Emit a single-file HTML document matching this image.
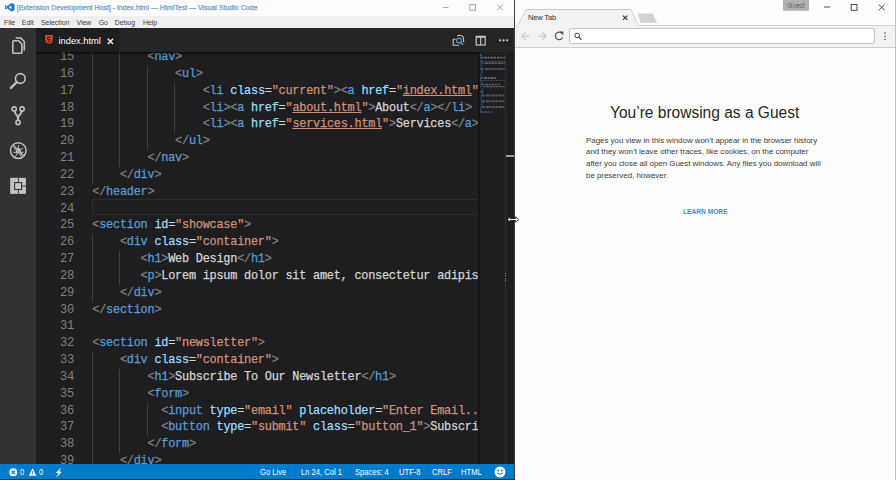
<!DOCTYPE html>
<html><head><meta charset="utf-8">
<style>
*{margin:0;padding:0;box-sizing:border-box}
html,body{width:896px;height:480px;overflow:hidden;background:#fff;font-family:"Liberation Sans",sans-serif}
.abs{position:absolute}
/* VS Code */
#vs{position:absolute;left:0;top:0;width:515px;height:480px;background:#1e1d1f;overflow:hidden}
#title{position:absolute;left:0;top:0;width:514px;height:16px;background:#fdfdfd}
#title .t{position:absolute;left:16.7px;top:3px;font-size:7px;color:#9d9d9d;white-space:nowrap;line-height:10px}
#menu{position:absolute;left:0;top:16px;width:514px;height:12px;background:#efeff0}
#menu span{position:absolute;top:1.5px;font-size:6.9px;color:#3a3a3a;line-height:10px;white-space:nowrap}
#act{position:absolute;left:0;top:28px;width:36px;height:436px;background:#323133}
#tabs{position:absolute;left:36px;top:28px;width:479px;height:24px;background:#252526}
#tab{position:absolute;left:0;top:0;width:83px;height:24px;background:#1e1d1f}
#editor{position:absolute;left:36px;top:52px;width:443px;height:412px;overflow:hidden;background:#1e1d1f}
.cl{position:absolute;white-space:pre;-webkit-text-stroke:0.25px currentColor;font-family:"Liberation Mono",monospace;font-size:11.9px;letter-spacing:-0.24px;line-height:16.84px;height:16.84px}
.ln{position:absolute;left:0;width:37.8px;text-align:right;font-family:"Liberation Mono",monospace;font-size:12.1px;letter-spacing:-0.35px;line-height:16.84px;color:#808080}
.ig{position:absolute;width:1px;background:#404040}
.curline{position:absolute;left:55.6px;width:400px;height:16.3px;border:1.5px solid #2c2c2c}
.p{color:#808080;-webkit-text-stroke:0.25px #808080}.t{color:#569cd6;-webkit-text-stroke:0.25px #569cd6}.a{color:#9cdcfe;-webkit-text-stroke:0.25px #9cdcfe}.s{color:#ce9178;-webkit-text-stroke:0.25px #ce9178}.x{color:#d4d4d4;-webkit-text-stroke:0.25px #d4d4d4}
u{text-decoration:underline;text-underline-offset:1px}
#shadow{position:absolute;left:36px;top:52px;width:443px;height:3px;background:linear-gradient(rgba(0,0,0,.6) 0%,rgba(0,0,0,.35) 50%,rgba(0,0,0,0) 100%)}
#minimap{position:absolute;left:479px;top:52px;width:27px;height:412px;background:#1e1d1f}
#ruler{position:absolute;left:505px;top:52px;width:9px;height:412px;background:#1e1d1f;border-left:1px solid #2e2e2e}
#status{position:absolute;left:0;top:464px;width:515px;height:15px;background:#007acc}
#status span{position:absolute;top:2.6px;font-size:8.6px;color:#fff;line-height:10px;white-space:nowrap;transform:scaleX(0.884);transform-origin:0 50%}
/* browser */
#br{position:absolute;left:515px;top:0;width:381px;height:480px;background:#fefefe}
#tbar{position:absolute;left:0;top:26px;width:381px;height:21px;background:#f2f2f2;border-bottom:1px solid #d2d2d2}
#addr{position:absolute;left:54px;top:28.3px;width:305.6px;height:16.2px;background:#fff;border:1px solid #c4c4c4;border-radius:2px}
#btitle{position:absolute;left:94.8px;top:103.1px;font-size:16px;transform:scaleX(0.97);transform-origin:0 0;color:#262626;white-space:nowrap;line-height:20px}
#bbody{position:absolute;left:71px;top:134.9px;font-size:7.9px;color:#3a3a3a;white-space:nowrap;line-height:11.6px}
#learn{position:absolute;left:168px;top:207.1px;font-size:6.8px;transform:scaleX(0.975);transform-origin:0 0;color:#4589d4;white-space:nowrap;line-height:10px;font-weight:bold}
</style></head>
<body>
<div id="vs">
  <div id="title">
    <svg class="abs" style="left:4.5px;top:3px" width="10" height="9" viewBox="0 0 10 9"><path d="M6.4 0 L9.5 1.3 V7.3 L6.4 8.6 L2.3 5.3 L0.9 6.5 L0.2 6.1 V2.5 L0.9 2.1 L2.3 3.3 Z M6.4 2.4 L3.7 4.3 L6.4 6.2 Z M1 3.4 V5.2 L2 4.3 Z" fill="#1a78d0" fill-rule="evenodd"/></svg>
    <div class="t">[Extension Development Host] - index.html — HtmlTest — Visual Studio Code</div>
    <svg class="abs" style="left:440px;top:2px" width="68" height="11" viewBox="0 0 68 11">
      <path d="M3 5.5 H8.6" stroke="#a0a0a0" stroke-width="0.9"/>
      <rect x="29.8" y="2.6" width="5.8" height="5.6" fill="none" stroke="#a0a0a0" stroke-width="0.9"/>
      <path d="M57.4 2.5 L63 8.2 M63 2.5 L57.4 8.2" stroke="#a0a0a0" stroke-width="0.9"/>
    </svg>
  </div>
  <div id="menu">
    <span style="left:4px">File</span>
    <span style="left:21.8px">Edit</span>
    <span style="left:41px">Selection</span>
    <span style="left:76.5px">View</span>
    <span style="left:98.7px">Go</span>
    <span style="left:114.7px">Debug</span>
    <span style="left:143px">Help</span>
  </div>
  <div id="act">
    <svg class="abs" style="left:0;top:0" width="36" height="180" viewBox="0 0 36 180">
      <g fill="none" stroke="#c0c0c0" stroke-width="1.6" stroke-linejoin="round">
        <path d="M13.6 12.8 H18.6 L21.9 16.1 V24.5 Q21.9 25.3 21.1 25.3 H13.6 Q12.8 25.3 12.8 24.5 V13.6 Q12.8 12.8 13.6 12.8 Z"/>
        <path d="M15.6 10 H20.8 L24.3 13.5 V22.6"/>
        <circle cx="20.3" cy="50.5" r="4.9"/>
        <path d="M16.9 54 L10.9 59.8" stroke-width="2.4" stroke-linecap="round"/>
        <circle cx="14.2" cy="81" r="2.1"/>
        <circle cx="22.1" cy="81" r="2.1"/>
        <circle cx="18" cy="94.5" r="2.1"/>
        <path d="M14.6 83.1 Q15 86 17 87.6 Q18 88.6 18 92.4 M21.7 83.1 Q21.3 86 19 87.6 Q18 88.6 18 92.4" stroke-width="1.9"/>
        <circle cx="18.3" cy="122.6" r="7.8" stroke-width="1.5"/>
        <path d="M13 117.2 L23.6 128" stroke-width="1.5"/>
      </g>
      <g stroke="#c0c0c0" stroke-width="1" stroke-linecap="round">
        <path d="M18.4 117.5 V120 M14 120.5 L16.2 121.6 M13.6 124.3 H15.8 M22.7 120.5 L20.6 121.6 M23.1 124.3 H21 M19.6 126 L21 128.3 M17 126 L15.6 128.3"/>
      </g>
      <ellipse cx="18.3" cy="122.9" rx="2.5" ry="2.9" fill="#c0c0c0"/>
      <path d="M12.6 117.6 L23.2 128.4" stroke="#333" stroke-width="0.8"/>
      <path d="M13 117.2 L23.6 128" stroke="#c0c0c0" stroke-width="1.1" fill="none"/>
      <rect x="10.2" y="149.8" width="15.7" height="16.1" fill="#c3c3c3"/>
      <rect x="14.6" y="154.6" width="7" height="6.9" fill="#c8c8c8" stroke="#333" stroke-width="1.1"/>
      <path d="M18.4 149.8 V154.1 M18.4 162 V165.9 M22.1 158 H25.9" stroke="#333" stroke-width="0.9"/>
    </svg>
  </div>
  <div id="tabs">
    <div id="tab">
      <svg class="abs" style="left:8.5px;top:7px" width="8" height="9" viewBox="0 0 8 9"><path d="M0 0 H8 L7.2 7.6 L4 8.8 L0.8 7.6 Z" fill="#e44d26"/><path d="M2 1.6 H6 L5.9 2.8 H3.2 L3.3 4 H5.8 L5.5 6.7 L4 7.2 L2.5 6.7 L2.4 5.4 H3.5 L3.6 6 L4 6.2 L4.5 6 L4.6 5 H2.3 Z" fill="#1e1e1e" opacity="0.85"/></svg>
      <div class="abs" style="left:22.5px;top:6.5px;font-size:9.3px;color:#ffffff;line-height:12px;white-space:nowrap">index.html</div>
      <svg class="abs" style="left:70.5px;top:9.5px" width="7" height="7" viewBox="0 0 7 7"><path d="M0.8 0.8 L6 6 M6 0.8 L0.8 6" stroke="#e8e8e8" stroke-width="1.6"/></svg>
    </div>
    <svg class="abs" style="left:410px;top:0" width="69" height="24" viewBox="0 0 69 24">
      <g fill="none" stroke="#c0c0c0" stroke-width="1.1">
        <path d="M9.8 11.3 H7.2 V17.3 H13.3"/>
        <path d="M11.2 8 Q12.2 7.3 13.8 7.3 Q17.6 7.6 17.6 11.5 V14.2"/>
      </g>
      <circle cx="13" cy="12.5" r="2.4" fill="#252526" stroke="#5a9ad2" stroke-width="1.2"/>
      <path d="M14.7 14.3 L17 16.8" stroke="#5a9ad2" stroke-width="1.5"/>
      <rect x="30.2" y="8.5" width="9" height="8.5" fill="none" stroke="#c5c5c5" stroke-width="1.2"/>
      <path d="M30 8.8 H39.4" stroke="#c5c5c5" stroke-width="2"/>
      <path d="M34.7 8.5 V17" stroke="#c5c5c5" stroke-width="1.2"/>
      <circle cx="54" cy="12.3" r="1.1" fill="#d0d0d0"/>
      <circle cx="57.6" cy="12.3" r="1.1" fill="#d0d0d0"/>
      <circle cx="61.2" cy="12.3" r="1.1" fill="#d0d0d0"/>
    </svg>
  </div>
  <div id="editor">
<div class="ig" style="left:55.5px;top:-3.00px;height:134.72px"></div>
<div class="ig" style="left:83.1px;top:-3.00px;height:117.88px"></div>
<div class="ig" style="left:110.7px;top:13.84px;height:84.20px"></div>
<div class="ig" style="left:138.3px;top:30.68px;height:50.52px"></div>
<div class="ig" style="left:55.5px;top:182.24px;height:67.36px"></div>
<div class="ig" style="left:83.1px;top:199.08px;height:33.68px"></div>
<div class="ig" style="left:55.5px;top:300.12px;height:117.88px"></div>
<div class="ig" style="left:83.1px;top:316.96px;height:84.20px"></div>
<div class="ig" style="left:110.7px;top:350.64px;height:33.68px"></div>
<div class="curline" style="top:147.16px"></div>
<div class="ln" style="top:-3.00px">15</div>
<div class="ln" style="top:13.84px">16</div>
<div class="ln" style="top:30.68px">17</div>
<div class="ln" style="top:47.52px">18</div>
<div class="ln" style="top:64.36px">19</div>
<div class="ln" style="top:81.20px">20</div>
<div class="ln" style="top:98.04px">21</div>
<div class="ln" style="top:114.88px">22</div>
<div class="ln" style="top:131.72px">23</div>
<div class="ln" style="top:148.56px">24</div>
<div class="ln" style="top:165.40px">25</div>
<div class="ln" style="top:182.24px">26</div>
<div class="ln" style="top:199.08px">27</div>
<div class="ln" style="top:215.92px">28</div>
<div class="ln" style="top:232.76px">29</div>
<div class="ln" style="top:249.60px">30</div>
<div class="ln" style="top:266.44px">31</div>
<div class="ln" style="top:283.28px">32</div>
<div class="ln" style="top:300.12px">33</div>
<div class="ln" style="top:316.96px">34</div>
<div class="ln" style="top:333.80px">35</div>
<div class="ln" style="top:350.64px">36</div>
<div class="ln" style="top:367.48px">37</div>
<div class="ln" style="top:384.32px">38</div>
<div class="ln" style="top:401.16px">39</div>
<div class="ln" style="top:418.00px">40</div>
<div class="cl" style="top:-3.00px;left:111.50px"><span class="p">&lt;</span><span class="t">nav</span><span class="p">&gt;</span></div>
<div class="cl" style="top:13.84px;left:139.10px"><span class="p">&lt;</span><span class="t">ul</span><span class="p">&gt;</span></div>
<div class="cl" style="top:30.68px;left:166.70px"><span class="p">&lt;</span><span class="t">li</span> <span class="a">class</span><span class="x">=</span><span class="s">&quot;current&quot;</span><span class="p">&gt;</span><span class="p">&lt;</span><span class="t">a</span> <span class="a">href</span><span class="x">=</span><span class="s">"<u>index.html</u>"</span><span class="p">&gt;</span><span class="x">Home</span><span class="p">&lt;/</span><span class="t">a</span><span class="p">&gt;</span><span class="p">&lt;/</span><span class="t">li</span><span class="p">&gt;</span></div>
<div class="cl" style="top:47.52px;left:166.70px"><span class="p">&lt;</span><span class="t">li</span><span class="p">&gt;</span><span class="p">&lt;</span><span class="t">a</span> <span class="a">href</span><span class="x">=</span><span class="s">"<u>about.html</u>"</span><span class="p">&gt;</span><span class="x">About</span><span class="p">&lt;/</span><span class="t">a</span><span class="p">&gt;</span><span class="p">&lt;/</span><span class="t">li</span><span class="p">&gt;</span></div>
<div class="cl" style="top:64.36px;left:166.70px"><span class="p">&lt;</span><span class="t">li</span><span class="p">&gt;</span><span class="p">&lt;</span><span class="t">a</span> <span class="a">href</span><span class="x">=</span><span class="s">"<u>services.html</u>"</span><span class="p">&gt;</span><span class="x">Services</span><span class="p">&lt;/</span><span class="t">a</span><span class="p">&gt;</span><span class="p">&lt;/</span><span class="t">li</span><span class="p">&gt;</span></div>
<div class="cl" style="top:81.20px;left:139.10px"><span class="p">&lt;/</span><span class="t">ul</span><span class="p">&gt;</span></div>
<div class="cl" style="top:98.04px;left:111.50px"><span class="p">&lt;/</span><span class="t">nav</span><span class="p">&gt;</span></div>
<div class="cl" style="top:114.88px;left:83.90px"><span class="p">&lt;/</span><span class="t">div</span><span class="p">&gt;</span></div>
<div class="cl" style="top:131.72px;left:56.30px"><span class="p">&lt;/</span><span class="t">header</span><span class="p">&gt;</span></div>
<div class="cl" style="top:148.56px;left:56.30px"></div>
<div class="cl" style="top:165.40px;left:56.30px"><span class="p">&lt;</span><span class="t">section</span> <span class="a">id</span><span class="x">=</span><span class="s">&quot;showcase&quot;</span><span class="p">&gt;</span></div>
<div class="cl" style="top:182.24px;left:83.90px"><span class="p">&lt;</span><span class="t">div</span> <span class="a">class</span><span class="x">=</span><span class="s">&quot;container&quot;</span><span class="p">&gt;</span></div>
<div class="cl" style="top:199.08px;left:104.60px"><span class="p">&lt;</span><span class="t">h1</span><span class="p">&gt;</span><span class="x">Web Design</span><span class="p">&lt;/</span><span class="t">h1</span><span class="p">&gt;</span></div>
<div class="cl" style="top:215.92px;left:104.60px"><span class="p">&lt;</span><span class="t">p</span><span class="p">&gt;</span><span class="x">Lorem ipsum dolor sit amet, consectetur adipisicing elit.</span><span class="p">&lt;/</span><span class="t">p</span><span class="p">&gt;</span></div>
<div class="cl" style="top:232.76px;left:83.90px"><span class="p">&lt;/</span><span class="t">div</span><span class="p">&gt;</span></div>
<div class="cl" style="top:249.60px;left:56.30px"><span class="p">&lt;/</span><span class="t">section</span><span class="p">&gt;</span></div>
<div class="cl" style="top:266.44px;left:56.30px"></div>
<div class="cl" style="top:283.28px;left:56.30px"><span class="p">&lt;</span><span class="t">section</span> <span class="a">id</span><span class="x">=</span><span class="s">&quot;newsletter&quot;</span><span class="p">&gt;</span></div>
<div class="cl" style="top:300.12px;left:83.90px"><span class="p">&lt;</span><span class="t">div</span> <span class="a">class</span><span class="x">=</span><span class="s">&quot;container&quot;</span><span class="p">&gt;</span></div>
<div class="cl" style="top:316.96px;left:111.50px"><span class="p">&lt;</span><span class="t">h1</span><span class="p">&gt;</span><span class="x">Subscribe To Our Newsletter</span><span class="p">&lt;/</span><span class="t">h1</span><span class="p">&gt;</span></div>
<div class="cl" style="top:333.80px;left:111.50px"><span class="p">&lt;</span><span class="t">form</span><span class="p">&gt;</span></div>
<div class="cl" style="top:350.64px;left:125.30px"><span class="p">&lt;</span><span class="t">input</span> <span class="a">type</span><span class="x">=</span><span class="s">&quot;email&quot;</span> <span class="a">placeholder</span><span class="x">=</span><span class="s">&quot;Enter Email...&quot;</span><span class="p">&gt;</span></div>
<div class="cl" style="top:367.48px;left:125.30px"><span class="p">&lt;</span><span class="t">button</span> <span class="a">type</span><span class="x">=</span><span class="s">&quot;submit&quot;</span> <span class="a">class</span><span class="x">=</span><span class="s">&quot;button_1&quot;</span><span class="p">&gt;</span><span class="x">Subscribe</span><span class="p">&lt;/</span><span class="t">button</span><span class="p">&gt;</span></div>
<div class="cl" style="top:384.32px;left:111.50px"><span class="p">&lt;/</span><span class="t">form</span><span class="p">&gt;</span></div>
<div class="cl" style="top:401.16px;left:83.90px"><span class="p">&lt;/</span><span class="t">div</span><span class="p">&gt;</span></div>
<div class="cl" style="top:418.00px;left:56.30px"><span class="p">&lt;/</span><span class="t">section</span><span class="p">&gt;</span></div>
  </div>
  <div id="shadow"></div>
  <div id="minimap">
    <svg width="27" height="70" viewBox="0 0 27 70"><g opacity="0.7"><path d="M2 2 L1 5 L3 9 L1.5 12 L4 17 L2 22 L1 26 L3 30 L1.5 34 L4 39 L2 44 L3 50 L2 55 L1 60" stroke="#3f6488" stroke-width="1" fill="none"/><path d="M1 3.0 H3" stroke="#4d7398" stroke-width="1.0"/><path d="M2 5.6 H4.5" stroke="#4d7398" stroke-width="1.8"/><path d="M5 5.6 H26" stroke="#7c8690" stroke-width="1.8" stroke-dasharray="3 0.6 2 0.8"/><path d="M1 9.5 H3.5" stroke="#4d7398" stroke-width="1.0"/><path d="M5 9.5 H26" stroke="#5c646c" stroke-width="1.0" stroke-dasharray="3 0.6 2 0.8"/><path d="M3 11.3 H5" stroke="#4d7398" stroke-width="1.6"/><path d="M6 11.3 H26" stroke="#78828c" stroke-width="1.6" stroke-dasharray="3 0.6 2 0.8"/><path d="M1 17.0 H4" stroke="#4d7398" stroke-width="1.6"/><path d="M6 17 H26" stroke="#747e88" stroke-width="1.6" stroke-dasharray="3 0.6 2 0.8"/><path d="M2 20.0 H3.5" stroke="#4d7398" stroke-width="0.8"/><path d="M2 26.0 H4" stroke="#4d7398" stroke-width="1.8"/><path d="M5 26.0 H18" stroke="#7a848e" stroke-width="1.8" stroke-dasharray="3 0.6 2 0.8"/><path d="M1 28.4 H3" stroke="#4d7398" stroke-width="0.9"/><path d="M4 28.4 H26" stroke="#5c646c" stroke-width="0.9" stroke-dasharray="3 0.6 2 0.8"/><path d="M2 32.5 H5" stroke="#4d7398" stroke-width="1.6"/><path d="M6 32.5 H21" stroke="#6e7880" stroke-width="1.6" stroke-dasharray="3 0.6 2 0.8"/><path d="M4 34.6 H6" stroke="#4d7398" stroke-width="1.2"/><path d="M7 34.6 H26" stroke="#747e88" stroke-width="1.2" stroke-dasharray="3 0.6 2 0.8"/><path d="M1 39.7 H4" stroke="#4d7398" stroke-width="1.3"/><path d="M3 43.5 H6" stroke="#4d7398" stroke-width="2.0"/><path d="M7 43.5 H26" stroke="#6a747c" stroke-width="2.0" stroke-dasharray="3 0.6 2 0.8"/><path d="M3 49.3 H6" stroke="#4d7398" stroke-width="2.0"/><path d="M7 49.3 H26" stroke="#6a747c" stroke-width="2.0" stroke-dasharray="3 0.6 2 0.8"/><path d="M3 55.0 H6" stroke="#4d7398" stroke-width="2.0"/><path d="M7 55.0 H26" stroke="#6a747c" stroke-width="2.0" stroke-dasharray="3 0.6 2 0.8"/><path d="M1 60.0 H5" stroke="#4d7398" stroke-width="1.4"/><path d="M5.5 60.0 H14" stroke="#5c646c" stroke-width="1.4" stroke-dasharray="3 0.6 2 0.8"/></g></svg>
  </div>
  <div class="abs" style="left:477.5px;top:52px;width:2px;height:412px;background:linear-gradient(90deg,#181818,#101010 60%,#1a1a1a)"></div>
  <div id="ruler"><div class="abs" style="left:0;top:102.6px;width:9px;height:2.2px;background:#9c9c9c"></div><div class="abs" style="left:-1px;top:221px;width:1px;height:8px;background:repeating-linear-gradient(#8a8a8a 0 1px,transparent 1px 2.5px)"></div></div>
  <div id="status">
    <svg class="abs" style="left:8.5px;top:4.3px" width="56" height="10" viewBox="0 0 56 10">
      <circle cx="4.3" cy="4.3" r="4" fill="#fff"/>
      <path d="M2.6 2.6 L6 6 M6 2.6 L2.6 6" stroke="#007acc" stroke-width="1.1"/>
      <path d="M23.6 0.3 L27.4 7.8 H19.8 Z" fill="#fff"/>
      <path d="M23.6 3 V5.5 M23.6 6.3 V7" stroke="#007acc" stroke-width="0.9"/>
      <path d="M52.2 -0.5 L46.8 5 H49.6 L47 9.8 L53 3.8 H50.2 Z" fill="#fff"/>
    </svg>
    <span style="left:20px">0</span>
    <span style="left:39px">0</span>
    <span style="left:259.7px">Go Live</span>
    <span style="left:301px">Ln 24, Col 1</span>
    <span style="left:354.7px">Spaces: 4</span>
    <span style="left:399.4px">UTF-8</span>
    <span style="left:432px">CRLF</span>
    <span style="left:461px">HTML</span>
    <svg class="abs" style="left:493.5px;top:2.3px" width="12" height="12" viewBox="0 0 12 12">
      <circle cx="6" cy="6" r="5.5" fill="#fff"/>
      <circle cx="4.2" cy="4.5" r="0.9" fill="#007acc"/><circle cx="7.8" cy="4.5" r="0.9" fill="#007acc"/>
      <path d="M3 6.8 Q6 9.6 9 6.8" stroke="#007acc" stroke-width="1" fill="none"/>
    </svg>
  </div>
  <div class="abs" style="left:514px;top:0;width:1px;height:480px;background:#4a3a30"></div>
</div>
<div class="abs" style="left:0;top:479px;width:896px;height:1px;background:#3b2e26"></div>

<div id="br">
  <svg class="abs" style="left:0;top:0" width="381" height="49" viewBox="0 0 381 49">
    <path d="M0 25.7 H2.8 L11 9.5 H115.7 L123.5 25.7 H381" fill="#f2f2f2" stroke="#c9c9c9" stroke-width="1"/>
    <rect x="0" y="26.2" width="381" height="21" fill="#f2f2f2"/>
    <path d="M3.3 26 L11 10 H115.7 L123.3 26 Z" fill="#f2f2f2"/>
    <path d="M122.4 13.4 H138 L142 22.9 H125.8 Z" fill="#d4d4d4"/>
    <path d="M108 15.6 L112.4 19.8 M112.4 15.6 L108 19.8" stroke="#333" stroke-width="1.1"/>
    <!-- guest badge -->
    <rect x="268" y="0" width="26" height="10.8" fill="#b2b2b2"/>
    <text x="281" y="8" font-size="6.5" text-anchor="middle" fill="#e0e0e0" stroke="#666" stroke-width="0.35" font-family="Liberation Sans">Guest</text>
    <path d="M309 7 H315" stroke="#4a4a4a" stroke-width="1"/>
    <rect x="336.2" y="4.5" width="5.8" height="5.8" fill="none" stroke="#4a4a4a" stroke-width="1"/>
    <path d="M363.7 4.5 L369.7 10.4 M369.7 4.5 L363.7 10.4" stroke="#4a4a4a" stroke-width="1"/>
    <!-- nav -->
    <path d="M7 36.2 H14.6 M7 36.2 L10.5 32.6 M7 36.2 L10.5 39.8" stroke="#c4c4c4" stroke-width="1.1" fill="none"/>
    <path d="M23.5 36.2 H31 M31 36.2 L27.5 32.6 M31 36.2 L27.5 39.8" stroke="#c4c4c4" stroke-width="1.1" fill="none"/>
    <path d="M47 33.3 A3.8 3.8 0 1 0 47.6 37.5" stroke="#555" stroke-width="1.3" fill="none"/>
    <path d="M44.6 31.5 L48.3 31.5 L48.3 35.2 Z" fill="#555"/>
    <path d="M370 33 v0.1 M370 36.2 v0.1 M370 39.4 v0.1" stroke="#555" stroke-width="1.6" stroke-linecap="round"/>
    <path d="M0 47.5 H381" stroke="#cfcfcf" stroke-width="1"/>
  </svg>
  <div id="addr">
    <svg class="abs" style="left:4px;top:3px" width="9" height="9" viewBox="0 0 9 9"><circle cx="3.2" cy="3.5" r="2.3" fill="none" stroke="#3a3a3a" stroke-width="1"/><path d="M4.8 5.1 L7.3 7.6" stroke="#3a3a3a" stroke-width="1.3"/></svg>
  </div>
  <div class="abs" style="left:13px;top:12px;font-size:7.6px;letter-spacing:-0.2px;color:#333;line-height:11px;white-space:nowrap">New Tab</div>
  <div id="btitle">You’re browsing as a Guest</div>
  <div id="bbody">Pages you view in this window won’t appear in the browser history<br>and they won’t leave other traces, like cookies, on the computer<br>after you close all open Guest windows. Any files you download will<br>be preserved, however.</div>
  <div id="learn">LEARN MORE</div>
  <div class="abs" style="left:380px;top:0;width:1px;height:480px;background:#e0b89a"></div>
</div>
<svg class="abs" style="left:505.5px;top:215.5px" width="14" height="7" viewBox="0 0 14 7"><path d="M1 3.5 L4.2 0.8 V2.4 H9.6 V0.8 L12.8 3.5 L9.6 6.2 V4.6 H4.2 V6.2 Z" fill="#fff" stroke="#000" stroke-width="0.8"/></svg>
</body></html>
